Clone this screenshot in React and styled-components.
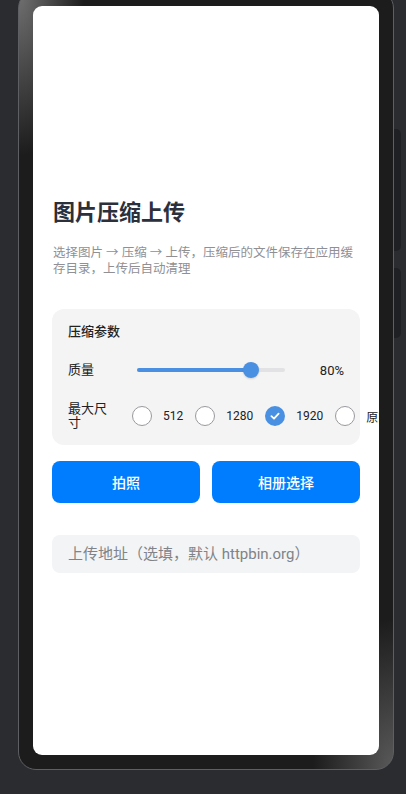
import React, { useState } from 'react';
import styled, { createGlobalStyle } from 'styled-components';

const GlobalStyle = createGlobalStyle`
  html, body {
    margin: 0;
    padding: 0;
    background: #2b2c30;
    overflow: hidden;
  }
  * {
    box-sizing: border-box;
  }
  body {
    font-family: Roboto, "Noto Sans CJK SC", sans-serif;
  }
`;

const SIZES = ['512', '1280', '1920', '原图'];
const TRACK_WIDTH = 148;
const THUMB_SIZE = 16;

function App() {
  const [quality] = useState(80);
  const [size, setSize] = useState('1920');

  // 滑块圆点在轨道内移动
  const thumbX = THUMB_SIZE / 2 + ((TRACK_WIDTH - THUMB_SIZE) * quality) / 100;

  return (
    <Page>
      <GlobalStyle />
      <PhoneBody>
        <SideKey top={128} height={122} />
        <SideKey top={267} height={70} />
        <Screen>
          <Title>图片压缩上传</Title>
          <Subtitle>选择图片 → 压缩 → 上传，压缩后的文件保存在应用缓存目录，上传后自动清理</Subtitle>

          <ParamCard>
            <CardTitle>压缩参数</CardTitle>
            <ParamRow>
              <ParamLabel>质量</ParamLabel>
              <SliderTrack>
                <SliderFill style={{ width: `${thumbX}px` }} />
                <SliderThumb style={{ left: `${thumbX}px` }} />
              </SliderTrack>
              <ValueText>{quality}%</ValueText>
            </ParamRow>
            <ParamRow>
              <ParamLabel>最大尺寸</ParamLabel>
              <RadioGroup>
                {SIZES.map((s) => (
                  <RadioItem key={s} onClick={() => setSize(s)}>
                    <RadioCircle checked={size === s}>
                      {size === s && (
                        <svg width="12" height="12" viewBox="0 0 12 12">
                          <path d="M2.4 6.2 L5 8.6 L9.6 3.6" fill="none" stroke="#fff" strokeWidth="1.8" strokeLinecap="round" strokeLinejoin="round" />
                        </svg>
                      )}
                    </RadioCircle>
                    <RadioText>{s}</RadioText>
                  </RadioItem>
                ))}
              </RadioGroup>
            </ParamRow>
          </ParamCard>

          <ButtonRow>
            <PrimaryButton>拍照</PrimaryButton>
            <PrimaryButton>相册选择</PrimaryButton>
          </ButtonRow>

          <UrlInput placeholder="上传地址（选填，默认 httpbin.org）" />
        </Screen>
      </PhoneBody>
    </Page>
  );
}

export default App;

const Page = styled.div`
  width: 406px;
  height: 794px;
  padding: 0 12px 0 18px;
  background: #2b2c30;
`;

// 手机外壳
const PhoneBody = styled.div`
  position: relative;
  width: 376px;
  margin-top: -10px;
  padding: 15px 14px 14px;
  border: 1px solid #5e5f62;
  border-radius: 18px;
  background:
    radial-gradient(ellipse 65px 165px at 0 0, rgba(150, 150, 150, 0.7), rgba(150, 150, 150, 0) 100%),
    radial-gradient(ellipse 80px 150px at 100% 100%, rgba(130, 130, 130, 0.6), rgba(130, 130, 130, 0) 100%),
    #1c1c1c;
`;

const SideKey = styled.div`
  position: absolute;
  right: -8px;
  top: ${({ top }) => top + 10}px;
  width: 7px;
  height: ${({ height }) => height}px;
  background: #1f2023;
  border-radius: 0 5px 5px 0;
`;

const Screen = styled.div`
  height: 749px;
  background: #fff;
  border-radius: 9px;
  overflow: hidden;
  padding: 192px 19px 0 19px;
`;

const Title = styled.h1`
  margin: 0 0 0 1px;
  font-size: 22px;
  line-height: 30px;
  font-weight: 700;
  color: #2b303b;
`;

const Subtitle = styled.p`
  margin: 17px 0 0 1px;
  font-size: 12.5px;
  line-height: 16px;
  color: #909094;
`;

// 参数卡片
const ParamCard = styled.section`
  margin-top: 32px;
  width: 308px;
  padding: 14px 15px 12px 16px;
  background: #f4f4f5;
  border-radius: 12px;
`;

const CardTitle = styled.div`
  font-size: 13px;
  line-height: 18px;
  font-weight: 500;
  color: #222;
  margin-bottom: 12px;
`;

const ParamRow = styled.div`
  display: flex;
  align-items: center;
  min-height: 34px;
  margin-bottom: 12px;
  &:last-child {
    margin-bottom: 0;
  }
`;

const ParamLabel = styled.div`
  width: 48px;
  flex-shrink: 0;
  font-size: 13px;
  line-height: 14px;
  color: #222;
`;

const SliderTrack = styled.div`
  position: relative;
  margin-left: 21px;
  width: ${TRACK_WIDTH}px;
  height: 4px;
  border-radius: 2px;
  background: #e2e2e4;
`;

const SliderFill = styled.div`
  height: 100%;
  border-radius: 2px;
  background: #4a90e2;
`;

const SliderThumb = styled.div`
  position: absolute;
  top: 50%;
  width: ${THUMB_SIZE}px;
  height: ${THUMB_SIZE}px;
  margin: -8px 0 0 -8px;
  border-radius: 50%;
  background: #4a90e2;
  box-shadow: 0 1px 2px rgba(0, 0, 0, 0.15);
`;

const ValueText = styled.div`
  margin-left: auto;
  margin-right: 1px;
  font-size: 13px;
  color: #222;
`;

const RadioGroup = styled.div`
  display: flex;
  align-items: center;
  margin-left: 16px;
  white-space: nowrap;
`;

const RadioItem = styled.label`
  display: flex;
  align-items: center;
  cursor: pointer;
`;

const RadioCircle = styled.span`
  width: 20px;
  height: 20px;
  border-radius: 50%;
  display: flex;
  align-items: center;
  justify-content: center;
  border: ${({ checked }) => (checked ? 'none' : '1px solid #9a9a9e')};
  background: ${({ checked }) => (checked ? '#4a90e2' : '#fff')};
  flex-shrink: 0;
`;

const RadioText = styled.span`
  margin: 0 12px 0 11px;
  font-size: 12px;
  color: #222;
`;

const ButtonRow = styled.div`
  display: grid;
  grid-template-columns: 1fr 1fr;
  gap: 12px;
  width: 308px;
  margin-top: 16px;
`;

const PrimaryButton = styled.button`
  height: 42px;
  border: none;
  border-radius: 8px;
  background: #007dfe;
  color: #fff;
  font-family: inherit;
  font-size: 14px;
  font-weight: 500;
`;

const UrlInput = styled.input`
  display: block;
  width: 308px;
  height: 38px;
  margin-top: 32px;
  padding: 0 16px;
  border: none;
  border-radius: 8px;
  background: #f3f4f5;
  font-family: inherit;
  font-size: 15px;
  color: #333;
  outline: none;
  &::placeholder {
    color: #808387;
  }
`;
